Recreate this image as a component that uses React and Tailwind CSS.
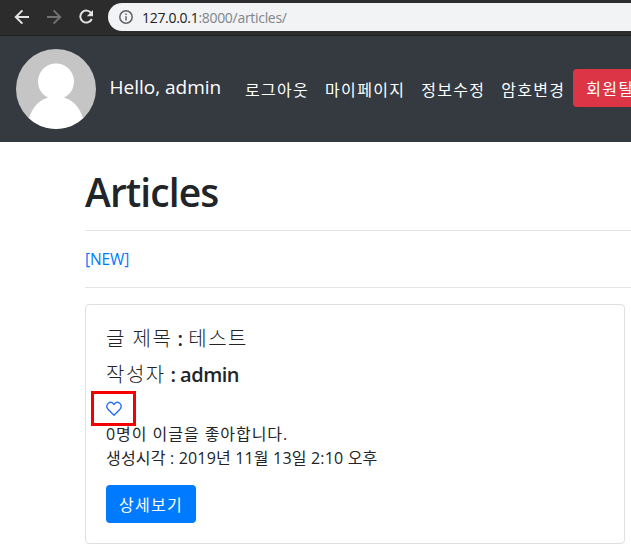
import React from "react";

const NAV_LINKS = ["로그아웃", "마이페이지", "정보수정", "암호변경"];

function BrowserBar() {
  return (
    <div className="flex h-9 items-start border-b border-[#1e1f20] bg-[#2c2c2c] pt-[3px]">
      <div className="flex h-7 w-[108px] shrink-0 items-center">
        <svg className="ml-[14px] h-4 w-4" viewBox="0 0 16 16" fill="none" stroke="#e4e4e4" strokeWidth="2">
          <path d="M15 8H2.2M8.4 1.4 1.8 8l6.6 6.6" />
        </svg>
        <svg className="ml-4 h-4 w-4" viewBox="0 0 16 16" fill="none" stroke="#717171" strokeWidth="2">
          <path d="M1 8h12.8M7.6 1.4 14.2 8l-6.6 6.6" />
        </svg>
        <svg className="ml-4 h-4 w-4" viewBox="0 0 16 16" fill="none">
          <path d="M13.4 4.4A6 6 0 1 0 13.8 10" stroke="#e4e4e4" strokeWidth="2" />
          <path d="M15 1v6.2H8.8z" fill="#e4e4e4" />
        </svg>
      </div>
      <div className="flex h-7 flex-1 items-center rounded-l-full bg-[#f1f3f4] pl-[11px]">
        <svg className="h-[14px] w-[14px] shrink-0" viewBox="0 0 14 14" fill="none">
          <circle cx="7" cy="7" r="6.2" stroke="#5f6368" strokeWidth="1.5" />
          <path d="M7 6.2v4.3M7 3.4v1.5" stroke="#5f6368" strokeWidth="1.5" />
        </svg>
        <span className="ml-[9px] text-[14px] tracking-[-0.3px] text-[#80868b]">
          <span className="text-[#202124]">127.0.0.1</span>:8000/articles/
        </span>
      </div>
    </div>
  );
}

function Avatar() {
  return (
    <svg className="h-20 w-20 shrink-0" viewBox="0 0 80 80">
      <defs>
        <clipPath id="avatar">
          <circle cx="40" cy="40" r="40" />
        </clipPath>
      </defs>
      <g clipPath="url(#avatar)">
        <rect width="80" height="80" fill="#c5c5c5" />
        <circle cx="40" cy="32.5" r="18" fill="#fff" />
        <path d="M11 80C13 58 25 47.5 40 47.5S67 58 69 80z" fill="#fff" />
      </g>
    </svg>
  );
}

function NavBar() {
  return (
    <nav className="flex h-[106px] items-center bg-[#343a40] pl-4 text-white">
      <Avatar />
      <span className="ml-[13.5px] w-[112px] shrink-0 pb-1 text-[19px] leading-7">Hello, admin</span>
      <div className="ml-[23.5px] flex shrink-0 gap-4 pt-0.5">
        {NAV_LINKS.map((label) => (
          <a key={label} className="text-base leading-6 tracking-[1.3px]">{label}</a>
        ))}
      </div>
      <button className="mb-0.5 ml-2 h-[38px] w-[90px] shrink-0 rounded bg-[#dc3545] pt-0.5 text-base tracking-[1.3px]">회원탈퇴</button>
    </nav>
  );
}

function ArticleCard() {
  return (
    <article className="mt-4 h-60 w-[540px] rounded border border-[#dfdfdf] px-5 pt-[22px]">
      <h5 className="h-6 text-xl leading-6 font-semibold">
        <span className="font-light tracking-[1.5px]">글 제목</span> : <span className="font-light tracking-[1.5px]">테스트</span>
      </h5>
      <h5 className="mt-3 h-6 text-xl leading-6 font-semibold tracking-[-0.5px]">
        <span className="font-light tracking-[1.5px]">작성자</span> : admin
      </h5>
      <div className="-ml-[15px] mt-1 flex h-[35px] w-[45px] items-center border-3 border-[#f50000] pl-3">
        <svg className="h-4 w-4" viewBox="0 0 16 16" fill="none" stroke="#2470f4" strokeWidth="1.4" strokeLinejoin="round">
          <path d="M8 14.3 2 8.2C.2 6.3.5 3.5 2.3 2.2 4 1 6.2 1.3 7.4 2.8L8 3.5l.6-.7C9.8 1.3 12 1 13.7 2.2c1.8 1.3 2.1 4.1.3 6z" />
        </svg>
      </div>
      <p className="-mt-1 text-base leading-6 tracking-[0.95px]">0명이 이글을 좋아합니다.</p>
      <p className="text-base leading-6 tracking-[0.18px]">생성시각 : 2019년 11월 13일 2:10 오후</p>
      <button className="mt-[15px] h-[38px] w-[90px] rounded bg-[#007bff] pt-0.5 text-base tracking-[1.3px] text-white">상세보기</button>
    </article>
  );
}

export default function App() {
  return (
    <div className="h-[552px] w-[631px] overflow-hidden bg-white font-['Open_Sans','Noto_Sans_CJK_KR',sans-serif] text-[#212529]">
      <BrowserBar />
      <NavBar />
      <main className="pl-[85px]">
        <h1 className="h-[88px] pt-[26px] text-[39px] leading-[48px] font-semibold tracking-[-0.9px]">Articles</h1>
        <div className="flex h-[58px] items-center border-y border-[#e5e5e5] pt-0.5 text-[#007bff]">
          <a className="text-[15.5px] tracking-[-0.1px]">[NEW]</a>
        </div>
        <ArticleCard />
      </main>
    </div>
  );
}
